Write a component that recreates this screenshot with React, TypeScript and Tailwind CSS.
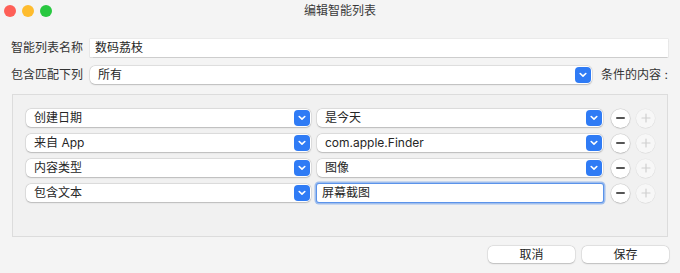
import React from "react";

const font = { fontFamily: 'Inter, "Noto Sans CJK SC", sans-serif' };

function Chevron() {
  return (
    <div className="w-[16px] h-[16px] rounded-[4px] bg-[#2f7bf5] flex items-center justify-center shrink-0 mr-[1px]">
      <svg width="8" height="6" viewBox="0 0 8 6">
        <path d="M1.2 1.5 L4 4.2 L6.8 1.5" fill="none" stroke="#ffffff" strokeWidth="1.6" strokeLinecap="round" strokeLinejoin="round" />
      </svg>
    </div>
  );
}

function Popup({ text, className }: { text: string; className: string }) {
  return (
    <div
      className={
        "h-[18px] bg-white rounded-[5px] flex items-center justify-between pl-[8px] shadow-[0_0_0_0.5px_rgba(0,0,0,0.12),0_0.5px_1.5px_rgba(0,0,0,0.18)] " +
        className
      }
    >
      <span className="leading-none">{text}</span>
      <Chevron />
    </div>
  );
}

function Minus() {
  return (
    <div className="w-[19px] h-[19px] rounded-full bg-white shadow-[0_0_0_0.5px_rgba(0,0,0,0.12),0_0.5px_1.5px_rgba(0,0,0,0.2)] flex items-center justify-center shrink-0">
      <div className="w-[9px] h-[1.3px] bg-[#555] rounded-full" />
    </div>
  );
}

function Plus() {
  return (
    <div className="w-[19px] h-[19px] rounded-full bg-[#f7f7f7] shadow-[0_0_0_0.5px_rgba(0,0,0,0.05),0_0.5px_1px_rgba(0,0,0,0.06)] flex items-center justify-center shrink-0">
      <svg width="10" height="10" viewBox="0 0 10 10">
        <path d="M5 1 V9 M1 5 H9" stroke="#cfcfcf" strokeWidth="1.2" strokeLinecap="round" />
      </svg>
    </div>
  );
}

export default function App() {
  const rows = [
    { a: "创建日期", b: "是今天", field: false },
    { a: "来自 App", b: "com.apple.Finder", field: false },
    { a: "内容类型", b: "图像", field: false },
    { a: "包含文本", b: "屏幕截图", field: true },
  ];
  return (
    <div style={font} className="w-[680px] h-[273px] bg-[#f4f4f4] text-[12px] text-[#262626] flex flex-col overflow-hidden">
      <div className="h-[22px] grid grid-cols-[1fr_auto_1fr] items-center">
        <div className="flex items-center gap-[6px] pl-[4px]">
          <div className="w-[12px] h-[12px] rounded-full bg-[#fe5f57]" />
          <div className="w-[12px] h-[12px] rounded-full bg-[#febc2e]" />
          <div className="w-[12px] h-[12px] rounded-full bg-[#28c840]" />
        </div>
        <div className="text-[12px] text-[#3a3a3a] leading-none">编辑智能列表</div>
        <div />
      </div>

      <div className="mt-[17px] h-[18px] flex items-center pl-[11px] pr-[12px]">
        <div className="w-[79px] text-[#333] leading-none">智能列表名称</div>
        <div className="flex-1 h-[18px] bg-white flex items-center pl-[5px] shadow-[0_0_0_0.5px_rgba(0,0,0,0.08),0_0.5px_1px_rgba(0,0,0,0.12)]">
          <span className="leading-none">数码荔枝</span>
        </div>
      </div>

      <div className="mt-[9px] h-[18px] flex items-center pl-[11px]">
        <div className="w-[79px] text-[#333] leading-none">包含匹配下列</div>
        <Popup text="所有" className="w-[502px]" />
        <div className="ml-[9px] text-[#333] leading-none">条件的内容 :</div>
      </div>

      <div className="mt-[10px] mx-[12px] h-[143px] border border-[#dcdcdc] bg-[#f1f1f1] pt-[14px] pl-[13px] flex flex-col gap-[7px]">
        {rows.map((r, i) => (
          <div key={i} className="h-[18px] flex items-center">
            <Popup text={r.a} className="w-[285px]" />
            {r.field ? (
              <div className="ml-[6px] w-[286px] h-[18px] bg-white flex items-center pl-[5px] rounded-[2px] shadow-[0_0_0_1px_#5b93ea,0_0_0_2.5px_rgba(91,147,234,0.55)]">
                <span className="leading-none">{r.b}</span>
              </div>
            ) : (
              <Popup text={r.b} className="ml-[6px] w-[286px]" />
            )}
            <div className="ml-[8px] flex items-center gap-[6px]">
              <Minus />
              <Plus />
            </div>
          </div>
        ))}
      </div>

      <div className="mt-[9px] flex justify-end gap-[7px] pr-[11px]">
        <div className="w-[87px] h-[17px] bg-white rounded-[5px] flex items-center justify-center shadow-[0_0_0_0.5px_rgba(0,0,0,0.1),0_0.5px_1.5px_rgba(0,0,0,0.18)]">
          <span className="leading-none">取消</span>
        </div>
        <div className="w-[87px] h-[17px] bg-white rounded-[5px] flex items-center justify-center shadow-[0_0_0_0.5px_rgba(0,0,0,0.1),0_0.5px_1.5px_rgba(0,0,0,0.18)]">
          <span className="leading-none">保存</span>
        </div>
      </div>
    </div>
  );
}
